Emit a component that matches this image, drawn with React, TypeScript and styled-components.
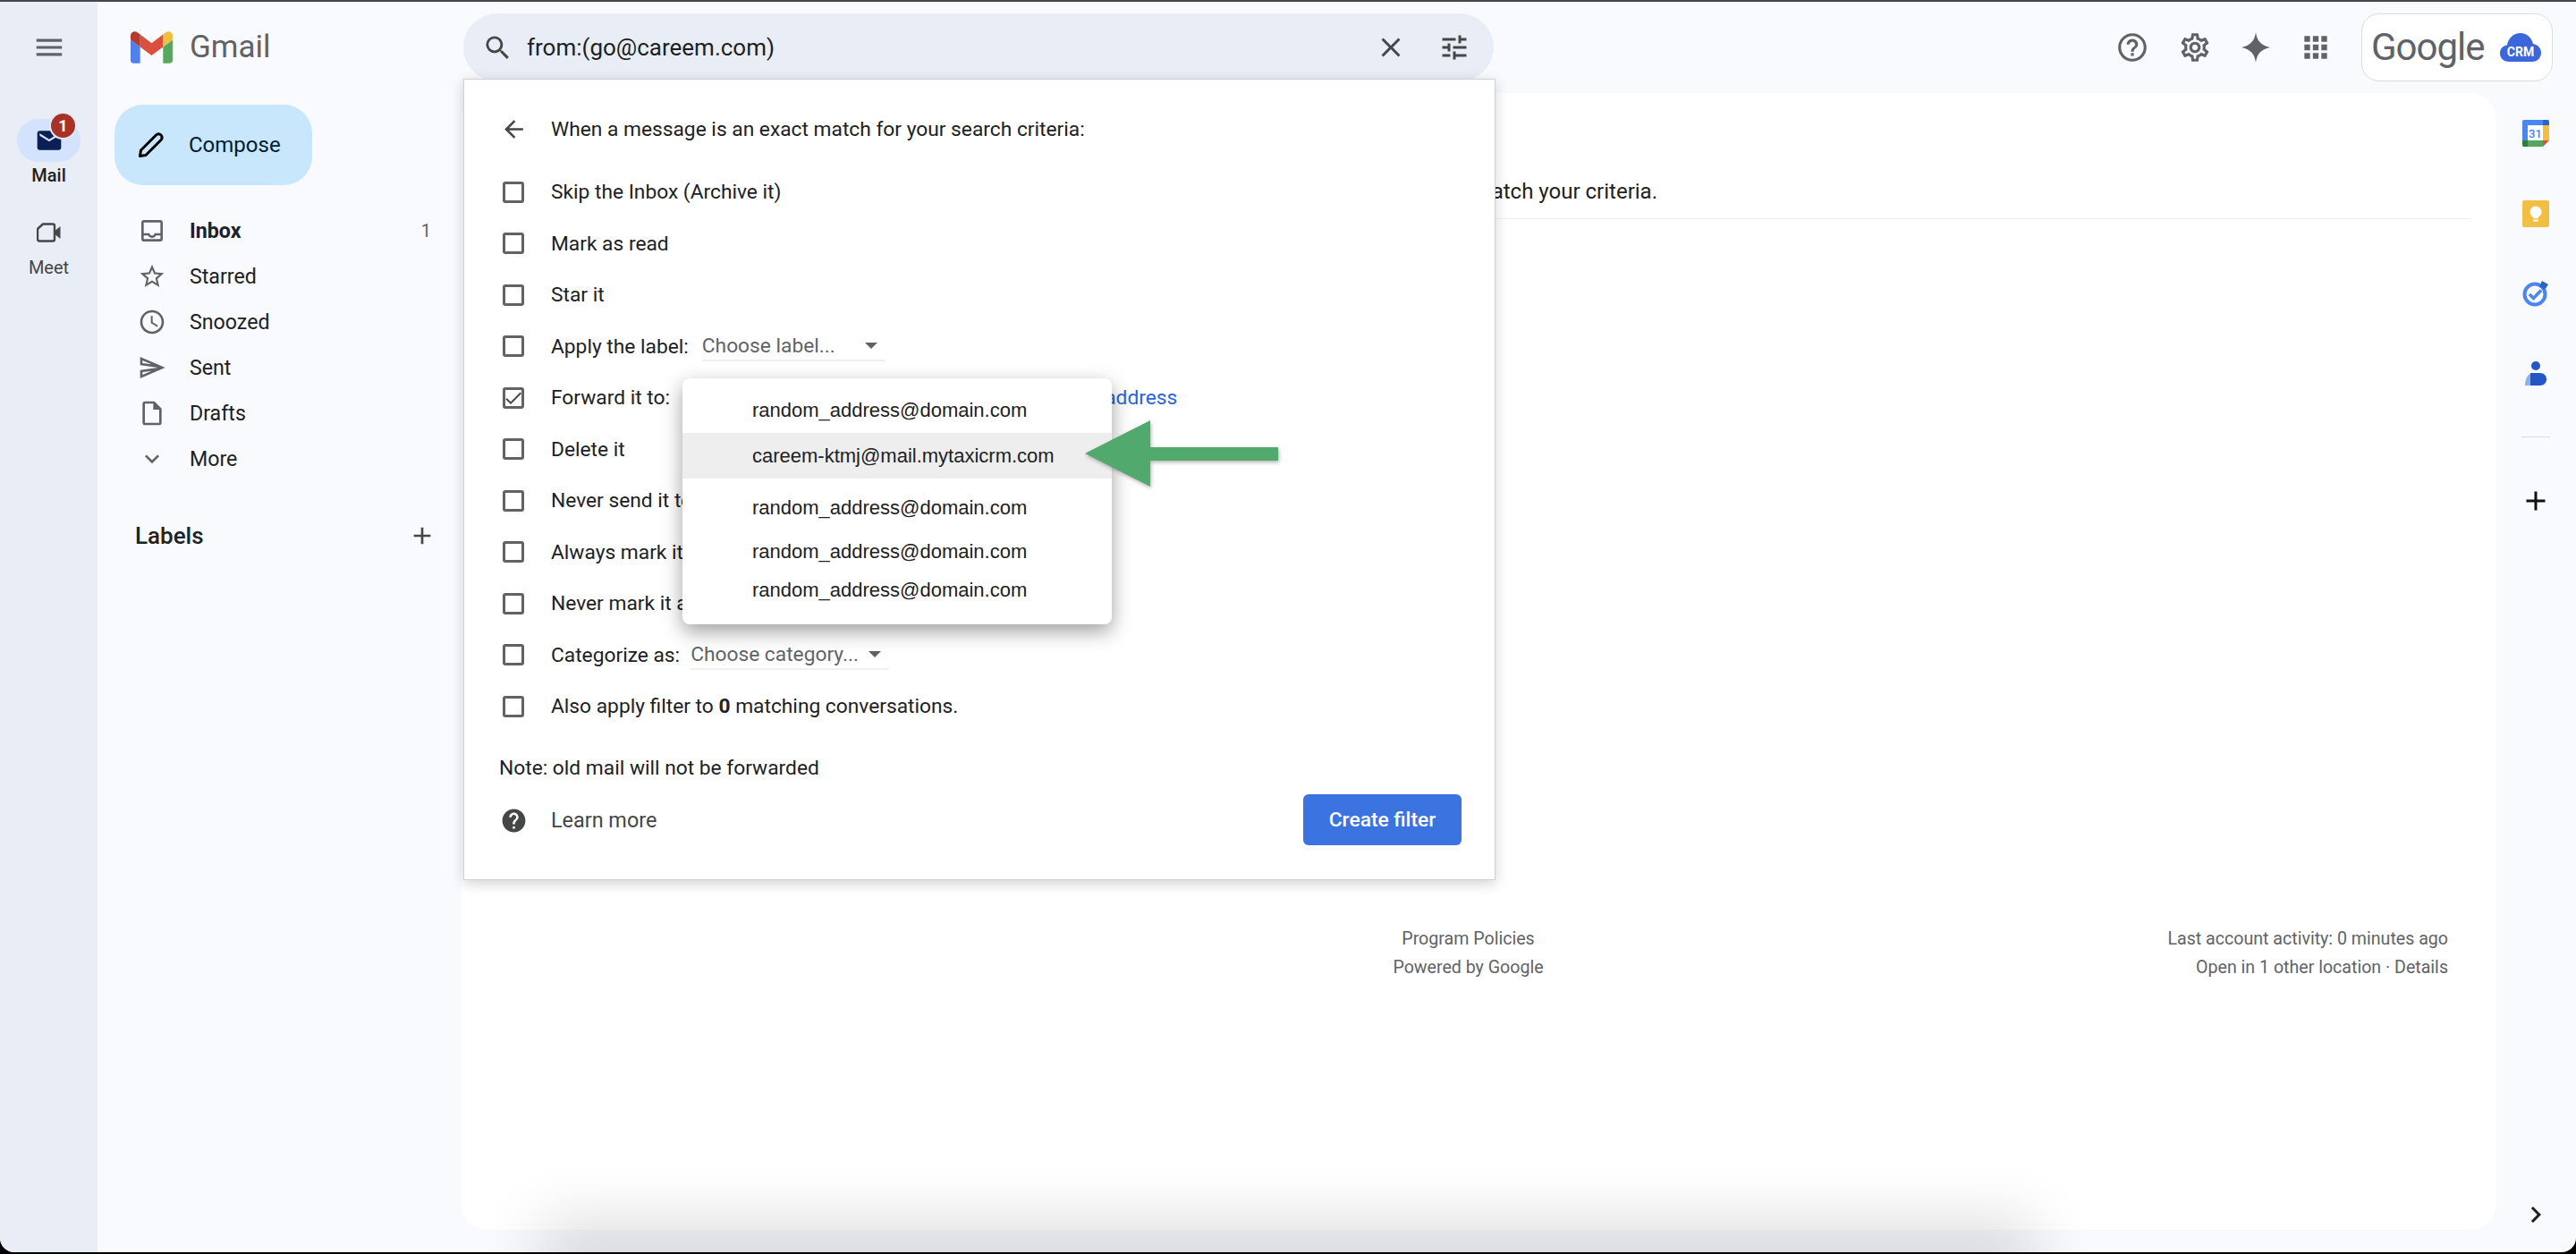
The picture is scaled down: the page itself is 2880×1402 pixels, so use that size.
import React from 'react';
import styled, { createGlobalStyle } from 'styled-components';
import {
  MdAdd,
  MdApps,
  MdArrowBack,
  MdCheck,
  MdChevronRight,
  MdClose,
  MdEmail,
  MdExpandMore,
  MdHelp,
  MdHelpOutline,
  MdMenu,
  MdOutlineAccessTime,
  MdOutlineInbox,
  MdOutlineInsertDriveFile,
  MdOutlineSend,
  MdOutlineSettings,
  MdSearch,
  MdStarBorder,
  MdTune,
} from 'react-icons/md';

const GlobalStyle = createGlobalStyle`
  html, body {
    margin: 0;
    padding: 0;
    background: #000;
  }
  * {
    box-sizing: border-box;
  }
  body {
    font-family: Roboto, "Liberation Sans", sans-serif;
  }
`;

const Frame = styled.div`
  position: relative;
  width: 2880px;
  height: 1400px;
  display: flex;
  flex-direction: column;
  overflow: hidden;
  background: #f8fafd;
  border-radius: 0 0 16px 16px;
`;

const TopLine = styled.div`
  height: 2px;
  flex: none;
  background: #45464a;
`;

const Shell = styled.div`
  flex: 1;
  display: flex;
  min-height: 0;
`;

/* far left app rail */
const Rail = styled.nav`
  width: 109px;
  flex: none;
  display: flex;
  flex-direction: column;
  align-items: center;
  background: #e9eef6;
`;

const MenuButton = styled.div`
  height: 102px;
  display: flex;
  align-items: center;
  justify-content: center;
  font-size: 38px;
  color: #5f6368;
  margin-bottom: 29px;
`;

const RailChip = styled.div<{ $active?: boolean }>`
  position: relative;
  width: 71px;
  height: 48px;
  display: flex;
  align-items: center;
  justify-content: center;
  border-radius: 24px;
  background: ${p => (p.$active ? '#d3e3fd' : 'transparent')};
  color: ${p => (p.$active ? '#0b1f52' : '#444746')};
  font-size: 32px;
`;

const Badge = styled.span`
  position: absolute;
  left: 38px;
  top: -6px;
  width: 27px;
  height: 27px;
  display: flex;
  align-items: center;
  justify-content: center;
  border-radius: 50%;
  background: #a93226;
  box-shadow: 0 0 0 2px #e3ebf7;
  color: #fff;
  font-size: 18px;
  font-weight: 700;
`;

const RailLabel = styled.div<{ $active?: boolean }>`
  margin-top: 2px;
  margin-bottom: 27px;
  line-height: 26px;
  font-size: 20px;
  font-weight: ${p => (p.$active ? 500 : 400)};
  color: ${p => (p.$active ? '#1f1f1f' : '#444746')};
`;

const Column = styled.div`
  flex: 1;
  min-width: 0;
  display: flex;
  flex-direction: column;
`;

const Header = styled.header`
  height: 102px;
  flex: none;
  display: flex;
  align-items: center;
  padding-right: 26px;
`;

const LogoArea = styled.div`
  width: 409px;
  flex: none;
  display: flex;
  align-items: center;
  gap: 19px;
  padding-left: 37px;
`;

const LogoText = styled.span`
  font-size: 35px;
  line-height: 44px;
  color: #5f6368;
`;

const SearchBox = styled.div`
  width: 1152px;
  height: 76px;
  flex: none;
  display: flex;
  align-items: center;
  padding: 0 26px 0 21px;
  border-radius: 38px;
  background: #e9eef6;
  color: #444746;
`;

const SearchIcon = styled.span`
  display: flex;
  font-size: 35px;
`;

const SearchText = styled.div`
  flex: 1;
  margin-left: 15px;
  font-size: 26px;
  color: #1f1f1f;
`;

const SearchAction = styled.span<{ $gap?: number }>`
  display: flex;
  margin-left: ${p => p.$gap ?? 0}px;
  font-size: 36px;
`;

const HeaderActions = styled.div`
  margin-left: auto;
  display: flex;
  align-items: center;
`;

const ActionButton = styled.div<{ $width: number }>`
  width: ${p => p.$width}px;
  display: flex;
  justify-content: center;
  font-size: 38px;
  color: #5f6368;
`;

const BrandBox = styled.div`
  width: 214px;
  height: 76px;
  margin-left: 16px;
  display: flex;
  align-items: center;
  justify-content: space-between;
  padding: 0 12px 0 10px;
  border: 1px solid #dadce0;
  border-radius: 20px;
  background: #fff;
`;

const BrandText = styled.span`
  font-size: 42px;
  line-height: 50px;
  letter-spacing: -1px;
  color: #5f6368;
`;

const Content = styled.div`
  flex: 1;
  min-height: 0;
  display: flex;
`;

const SideNav = styled.aside`
  width: 407px;
  flex: none;
  padding-top: 13px;
`;

const ComposeButton = styled.div`
  width: 221px;
  height: 90px;
  margin-left: 19px;
  display: flex;
  align-items: center;
  gap: 27px;
  padding-left: 26px;
  border-radius: 32px;
  background: #c8e6fc;
  color: #001d35;
  font-size: 24px;
`;

const NavList = styled.ul`
  list-style: none;
  margin: 25px 0 0;
  padding: 0;
`;

const NavItem = styled.li<{ $bold?: boolean }>`
  height: 51px;
  display: flex;
  align-items: center;
  gap: 26px;
  padding: 0 34px 0 45px;
  font-size: 23.2px;
  font-weight: ${p => (p.$bold ? 700 : 400)};
  color: #202124;
  svg {
    font-size: 32px;
    color: #5f6368;
    flex: none;
  }
`;

const NavCount = styled.span`
  margin-left: auto;
  font-size: 20px;
  font-weight: 400;
  color: #5f6368;
`;

const LabelsRow = styled.div`
  height: 40px;
  margin-top: 41px;
  display: flex;
  align-items: center;
  justify-content: space-between;
  padding: 0 28px 0 42px;
  font-size: 26px;
  font-weight: 500;
  color: #202124;
  svg {
    font-size: 32px;
    color: #444746;
  }
`;

const MainCard = styled.main`
  flex: 1;
  min-width: 0;
  margin-bottom: 25px;
  padding: 90px 27px 0 30px;
  border-radius: 28px;
  background: #fff;
`;

const Notice = styled.div`
  height: 40px;
  width: 1307px;
  display: flex;
  align-items: center;
  justify-content: flex-end;
  white-space: nowrap;
  font-size: 24px;
  color: #202124;
`;

const Divider = styled.div`
  height: 1px;
  margin-top: 10px;
  background: #eceef0;
`;

const Footer = styled.footer`
  margin-top: 789px;
  padding-right: 26px;
  display: grid;
  grid-template-columns: 1fr auto 1fr;
  font-size: 19.6px;
  line-height: 32px;
  color: #5f6368;
`;

const FooterCenter = styled.div`
  grid-column: 2;
  text-align: center;
`;

const FooterRight = styled.div`
  text-align: right;
`;

const RightRail = styled.aside`
  width: 90px;
  flex: none;
  display: flex;
  flex-direction: column;
  align-items: center;
  padding-bottom: 24px;
`;

const AddonSlot = styled.div<{ $lift?: number }>`
  height: 90px;
  display: flex;
  align-items: center;
  justify-content: center;
  padding-bottom: ${p => p.$lift ?? 0}px;
`;

const RailDivider = styled.div`
  width: 32px;
  height: 1px;
  margin-top: 24px;
  background: #dadce0;
`;

const RailPlus = styled.div`
  margin-top: 53px;
  display: flex;
  font-size: 36px;
  color: #111;
`;

const RailChevron = styled.div`
  margin-top: auto;
  display: flex;
  font-size: 36px;
  color: #1f1f1f;
`;

/* filter popup laid over the search results */
const FilterPanel = styled.section`
  position: absolute;
  left: 518px;
  top: 88px;
  width: 1154px;
  height: 896px;
  padding: 35px 37px 39px 39px;
  background: #fff;
  border: 1px solid #cfcfcf;
  box-shadow: 0 4px 14px rgba(0, 0, 0, 0.18);
  font-size: 22.75px;
  color: #202124;
  z-index: 2;
`;

const PanelHeading = styled.div`
  height: 40px;
  display: flex;
  align-items: center;
  margin-bottom: 22px;
`;

const RowIcon = styled.span<{ $color?: string }>`
  width: 58px;
  flex: none;
  display: flex;
  justify-content: center;
  padding-right: 26px;
  font-size: 31px;
  color: ${p => p.$color ?? '#444746'};
`;

const FilterRow = styled.div`
  height: 57.5px;
  display: flex;
  align-items: center;
  white-space: nowrap;
`;

const Checkbox = styled.span<{ $checked?: boolean }>`
  width: 24px;
  height: 24px;
  flex: none;
  display: flex;
  align-items: center;
  justify-content: center;
  margin: 0 30px 0 4px;
  border: 3px solid #5f6368;
  border-radius: 3px;
  color: #444746;
  font-size: 24px;
  svg {
    flex: none;
  }
`;

const SelectLabel = styled.div<{ $width: number; $gap: number }>`
  width: ${p => p.$width}px;
  height: 34px;
  margin-left: ${p => p.$gap}px;
  display: flex;
  align-items: center;
  justify-content: space-between;
  padding-right: 9px;
  border-bottom: 2px solid #eeeeee;
  color: #5f6368;
`;

const Caret = styled.span`
  width: 0;
  height: 0;
  border-left: 7px solid transparent;
  border-right: 7px solid transparent;
  border-top: 7px solid #5f6368;
`;

const ForwardSelect = styled.div`
  width: 264px;
  height: 44px;
  margin-left: 15px;
  border-radius: 6px;
  background: #f1f1f1;
`;

const ForwardLink = styled.span`
  margin-left: 46px;
  color: #2a64d8;
`;

const NoteLine = styled.div`
  height: 40px;
  margin-top: 20px;
  display: flex;
  align-items: center;
`;

const PanelFooter = styled.div`
  height: 57px;
  margin-top: 9px;
  display: flex;
  align-items: center;
  justify-content: space-between;
`;

const LearnMore = styled.div`
  display: flex;
  align-items: center;
  padding-top: 2px;
  font-size: 23.4px;
  color: #444746;
`;

const CreateButton = styled.div`
  width: 177px;
  height: 57px;
  display: flex;
  align-items: center;
  justify-content: center;
  border-radius: 6px;
  background: #3b73e0;
  color: #fff;
  font-weight: 500;
`;

const AddressMenu = styled.div`
  position: absolute;
  left: 244px;
  top: 334px;
  width: 480px;
  height: 275px;
  padding-top: 10px;
  border-radius: 8px;
  background: #fff;
  box-shadow: 0 8px 22px rgba(0, 0, 0, 0.38);
`;

const AddressItem = styled.div<{ $height: number; $active?: boolean }>`
  height: ${p => p.$height}px;
  display: flex;
  align-items: center;
  padding-left: 78px;
  font-family: "Liberation Sans", Arial, sans-serif;
  font-size: 22px;
  color: #202124;
  background: ${p => (p.$active ? '#eeeeee' : 'transparent')};
`;

const ArrowMark = styled.svg`
  position: absolute;
  left: 694px;
  top: 381px;
  filter: drop-shadow(1px 2px 2px rgba(0, 0, 0, 0.3));
`;

const BottomGlow = styled.div`
  position: absolute;
  left: 640px;
  top: 1402px;
  width: 1600px;
  height: 10px;
  box-shadow: 0 0 70px 36px rgba(0, 0, 0, 0.14);
  pointer-events: none;
`;

const GmailLogo = () => (
  <svg width="47" height="36" viewBox="52 42 88 66">
    <path fill="#4f80ec" d="M58 108h14V74L52 59v43c0 3.32 2.69 6 6 6" />
    <path fill="#57a85c" d="M120 108h14c3.32 0 6-2.69 6-6V59l-20 15" />
    <path fill="#f0bf3f" d="M120 48v26l20-15v-8c0-7.42-8.47-11.65-14.4-7.2" />
    <path fill="#db4f3f" d="M72 74V48l24 18 24-18v26L96 92" />
    <path fill="#b33a2c" d="M52 51v8l20 15V48l-5.6-4.2c-5.94-4.45-14.4-.22-14.4 7.2" />
  </svg>
);

const PencilIcon = () => (
  <svg width="30" height="30" viewBox="0 0 30 30">
    <path
      d="M2.500 27.500l1-6.500L20.500 4a3.800 3.800 0 0 1 5.500 5.500L9 26.500z"
      fill="none"
      stroke="#000"
      strokeWidth="3"
      strokeLinejoin="round"
    />
  </svg>
);

const MeetIcon = () => (
  <svg width="27" height="22" viewBox="0 0 27 22">
    <path
      d="M7 1.500h11a2 2 0 0 1 2 2v15a2 2 0 0 1-2 2H3a2 2 0 0 1-2-2V7z"
      fill="none"
      stroke="#444746"
      strokeWidth="2.400"
      strokeLinejoin="round"
    />
    <path fill="#444746" d="M21 8.500L26.500 4v14L21 13.500z" />
  </svg>
);

const Sparkle = () => (
  <svg width="32" height="34" viewBox="0 0 32 34">
    <path fill="#5f6368" d="M16 0c1.2 9.4 5.6 14.6 16 17-10.4 2.4-14.8 7.6-16 17-1.2-9.4-5.6-14.6-16-17C10.400 14.600 14.800 9.400 16 0z" />
  </svg>
);

const CrmCloud = () => (
  <svg width="46" height="32" viewBox="0 0 46 32">
    <path fill="#3b66dc" d="M10 32C4 32 0 28 0 22.500 0 17.500 3.500 14 8 13.500 9 6 15 0 23 0c7 0 12.500 5 14 12 5 .8 9 4.500 9 10 0 6-4.500 10-10 10z" />
    <text x="23" y="26" textAnchor="middle" fontFamily="Roboto, sans-serif" fontWeight="700" fontSize="14" fill="#fff">CRM</text>
  </svg>
);

const CalendarIcon = () => (
  <svg width="30" height="30" viewBox="0 0 30 30">
    <path fill="#4a86f0" d="M2 0h26v6H23v17H6v7H2a2 2 0 0 1-2-2V2a2 2 0 0 1 2-2z" />
    <rect x="6" y="6" width="17" height="17" fill="#fff" />
    <rect x="23" y="6" width="7" height="17" fill="#f2bf42" />
    <rect x="6" y="23" width="17" height="7" fill="#54a75e" />
    <path fill="#2f62c8" d="M23 0h5a2 2 0 0 1 2 2v4h-7z" />
    <path fill="#2f7d40" d="M0 23h6v7H2a2 2 0 0 1-2-2z" />
    <path fill="#db4f3f" d="M23 23h7l-7 7z" />
    <text x="14.500" y="20" textAnchor="middle" fontFamily="Roboto, sans-serif" fontWeight="500" fontSize="13" fill="#4a7fe6">31</text>
  </svg>
);

const KeepIcon = () => (
  <svg width="30" height="30" viewBox="0 0 30 30">
    <rect width="30" height="30" rx="2" fill="#f2bf42" />
    <circle cx="15" cy="13" r="6.500" fill="#fff" />
    <rect x="12" y="17" width="6" height="3" fill="#fff" />
    <rect x="12" y="21.500" width="6" height="2" fill="#fff" />
  </svg>
);

const TasksIcon = () => (
  <svg width="30" height="30" viewBox="0 0 30 30">
    <circle cx="14" cy="16" r="11.500" fill="none" stroke="#4a86f0" strokeWidth="4" />
    <path d="M8 16l4.500 4.500 8.500-9" fill="none" stroke="#4a86f0" strokeWidth="3.500" />
    <path fill="#2f62c8" d="M22 1l7 4-4 6-6-4z" />
  </svg>
);

const ContactsIcon = () => (
  <svg width="24" height="28" viewBox="0 0 24 28">
    <circle cx="12" cy="5" r="5" fill="#2457c5" />
    <path fill="#8fb0ee" d="M0 27c0-7 3-14 9-14h6v14z" />
    <path fill="#2457c5" d="M6 13h11c4 0 7 3 7 7 0 4-3 7-7 7H6z" />
  </svg>
);

const navItems = [
  { icon: <MdOutlineInbox />, text: 'Inbox', bold: true, count: '1' },
  { icon: <MdStarBorder />, text: 'Starred' },
  { icon: <MdOutlineAccessTime />, text: 'Snoozed' },
  { icon: <MdOutlineSend />, text: 'Sent' },
  { icon: <MdOutlineInsertDriveFile />, text: 'Drafts' },
  { icon: <MdExpandMore />, text: 'More' },
];

const App: React.FC = () => (
  <>
    <GlobalStyle />
    <Frame>
      <TopLine />
      <Shell>
        <Rail>
          <MenuButton>
            <MdMenu />
          </MenuButton>
          <RailChip $active>
            <MdEmail />
            <Badge>1</Badge>
          </RailChip>
          <RailLabel $active>Mail</RailLabel>
          <RailChip>
            <MeetIcon />
          </RailChip>
          <RailLabel>Meet</RailLabel>
        </Rail>

        <Column>
          <Header>
            <LogoArea>
              <GmailLogo />
              <LogoText>Gmail</LogoText>
            </LogoArea>
            <SearchBox>
              <SearchIcon>
                <MdSearch />
              </SearchIcon>
              <SearchText>from:(go@careem.com)</SearchText>
              <SearchAction>
                <MdClose />
              </SearchAction>
              <SearchAction $gap={35}>
                <MdTune />
              </SearchAction>
            </SearchBox>
            <HeaderActions>
              <ActionButton $width={68}>
                <MdHelpOutline />
              </ActionButton>
              <ActionButton $width={72}>
                <MdOutlineSettings />
              </ActionButton>
              <ActionButton $width={64}>
                <Sparkle />
              </ActionButton>
              <ActionButton $width={70}>
                <MdApps />
              </ActionButton>
              <BrandBox>
                <BrandText>Google</BrandText>
                <CrmCloud />
              </BrandBox>
            </HeaderActions>
          </Header>

          <Content>
            <SideNav>
              <ComposeButton>
                <PencilIcon />
                Compose
              </ComposeButton>
              <NavList>
                {navItems.map(item => (
                  <NavItem key={item.text} $bold={item.bold}>
                    {item.icon}
                    {item.text}
                    {item.count && <NavCount>{item.count}</NavCount>}
                  </NavItem>
                ))}
              </NavList>
              <LabelsRow>
                Labels
                <MdAdd />
              </LabelsRow>
            </SideNav>

            <MainCard>
              <Notice>There are no conversations that match your criteria.</Notice>
              <Divider />
              <Footer>
                <FooterCenter>
                  <div>Program Policies</div>
                  <div>Powered by Google</div>
                </FooterCenter>
                <FooterRight>
                  <div>Last account activity: 0 minutes ago</div>
                  <div>Open in 1 other location · Details</div>
                </FooterRight>
              </Footer>
            </MainCard>

            <RightRail>
              <AddonSlot>
                <CalendarIcon />
              </AddonSlot>
              <AddonSlot>
                <KeepIcon />
              </AddonSlot>
              <AddonSlot $lift={3}>
                <TasksIcon />
              </AddonSlot>
              <AddonSlot $lift={2}>
                <ContactsIcon />
              </AddonSlot>
              <RailDivider />
              <RailPlus>
                <MdAdd />
              </RailPlus>
              <RailChevron>
                <MdChevronRight />
              </RailChevron>
            </RightRail>
          </Content>
        </Column>
      </Shell>

      <BottomGlow />

      <FilterPanel>
        <PanelHeading>
          <RowIcon>
            <MdArrowBack />
          </RowIcon>
          When a message is an exact match for your search criteria:
        </PanelHeading>

        <FilterRow>
          <Checkbox />
          Skip the Inbox (Archive it)
        </FilterRow>
        <FilterRow>
          <Checkbox />
          Mark as read
        </FilterRow>
        <FilterRow>
          <Checkbox />
          Star it
        </FilterRow>
        <FilterRow>
          <Checkbox />
          Apply the label:
          <SelectLabel $width={205} $gap={15}>
            Choose label...
            <Caret />
          </SelectLabel>
        </FilterRow>
        <FilterRow>
          <Checkbox $checked>
            <MdCheck />
          </Checkbox>
          Forward it to:
          <ForwardSelect />
          <ForwardLink>Add forwarding address</ForwardLink>
        </FilterRow>
        <FilterRow>
          <Checkbox />
          Delete it
        </FilterRow>
        <FilterRow>
          <Checkbox />
          Never send it to Spam
        </FilterRow>
        <FilterRow>
          <Checkbox />
          Always mark it as important
        </FilterRow>
        <FilterRow>
          <Checkbox />
          Never mark it as important
        </FilterRow>
        <FilterRow>
          <Checkbox />
          Categorize as:
          <SelectLabel $width={222} $gap={12}>
            Choose category...
            <Caret />
          </SelectLabel>
        </FilterRow>
        <FilterRow>
          <Checkbox />
          <span>
            Also apply filter to <b>0</b> matching conversations.
          </span>
        </FilterRow>

        <NoteLine>Note: old mail will not be forwarded</NoteLine>
        <PanelFooter>
          <LearnMore>
            <RowIcon $color="#444746">
              <MdHelp />
            </RowIcon>
            Learn more
          </LearnMore>
          <CreateButton>Create filter</CreateButton>
        </PanelFooter>

        <AddressMenu>
          <AddressItem $height={51}>random_address@domain.com</AddressItem>
          <AddressItem $height={51} $active>
            careem-ktmj@mail.mytaxicrm.com
          </AddressItem>
          <AddressItem $height={66}>random_address@domain.com</AddressItem>
          <AddressItem $height={32}>random_address@domain.com</AddressItem>
          <AddressItem $height={54}>random_address@domain.com</AddressItem>
        </AddressMenu>

        <ArrowMark width="218" height="76" viewBox="0 0 218 76">
          <path fill="#52a96d" d="M0 37L73 0V30H216V45H73V74z" />
        </ArrowMark>
      </FilterPanel>
    </Frame>
  </>
);

export default App;
